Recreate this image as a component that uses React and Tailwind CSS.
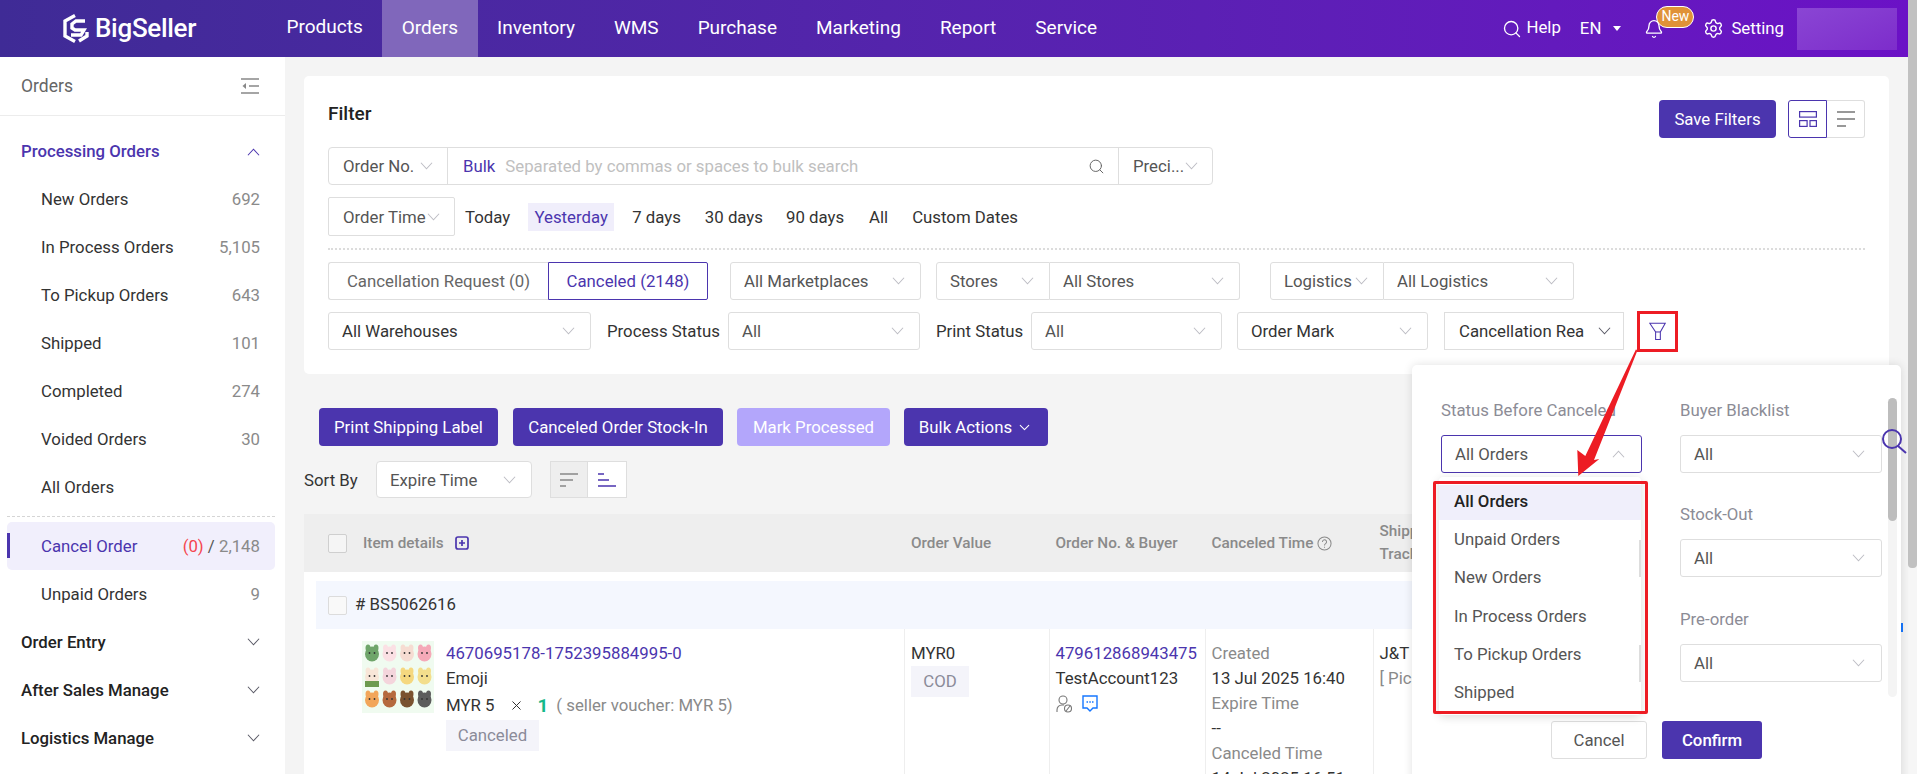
import React from "react";
import { Search, Bell, Settings, ChevronDown, X } from "lucide-react";

const Chev = ({ up = false, dark = false, purple = false }) => (
  <svg viewBox="0 0 14 8" className="w-[13px] h-[8px] shrink-0" fill="none" stroke={purple ? "#4b35ae" : dark ? "#5a5a66" : "#bdbdc4"} strokeWidth="1.1">
    <path d={up ? "M1 7.500 7 1l6 6.500" : "M1 .5 7 7l6-6.500"} />
  </svg>
);

const Sel = ({ w, text, dark = true, mr = "mr-[12px]", rounded = "rounded-[3px]" }) => (
  <div className={`${w} h-[38px] border border-[#dedede] ${rounded} bg-white flex items-center justify-between pl-[13px] pr-[15px] ${mr} shrink-0`}>
    <span className={`truncate pt-[2px] ${dark ? "text-[#333]" : "text-[#555]"}`}>{text}</span>
    <Chev />
  </div>
);

const SideItem = ({ label, count }) => (
  <div className="h-[48px] flex items-center justify-between pl-[41px] pr-[25px] pt-[2px]">
    <span className="text-[#333]">{label}</span>
    <span className="text-[#8a8a8a]">{count}</span>
  </div>
);

const SideGroup = ({ label }) => (
  <div className="h-[48px] flex items-center justify-between pl-[21px] pr-[25px]">
    <span className="text-[#222] font-medium pt-[2px]">{label}</span>
    <Chev dark />
  </div>
);

const Btn = ({ w, text, cls = "bg-[#4b35ae] text-white" }) => (
  <div className={`${w} h-[38px] pt-[2px] rounded-[4px] flex items-center justify-center shrink-0 ${cls}`}>{text}</div>
);

const Thumb = () => {
  const a = [
    ["#6fa56a", "#fbe0e4", "#f6dcd2", "#f5a9b8"],
    ["#f8e6d8", "#f4d5dc", "#f5d87f", "#f3de8c"],
    ["#f2a65a", "#b5693e", "#7a5230", "#5c5c5c"],
  ];
  return (
    <svg viewBox="0 0 72 72" className="w-[72px] h-[72px] shrink-0 bg-[#f0fbf0]">
      {a.map((r, i) =>
        r.map((c, j) => {
          const x = 10 + j * 17.5;
          const y = 13 + i * 23;
          return (
            <g key={`${i}${j}`}>
              <ellipse cx={x - 4} cy={y - 6} rx="2.500" ry="3.500" fill={c} />
              <ellipse cx={x + 4} cy={y - 6} rx="2.500" ry="3.500" fill={c} />
              <ellipse cx={x} cy={y} rx="7" ry="7.500" fill={c} />
              {i === 1 && j === 0 && <path d="M3 16h14v6H3z" transform="translate(0 24)" fill="#6d9a4f" />}
              <circle cx={x - 2.500} cy={y - 1} r="0.9" fill="#333" />
              <circle cx={x + 2.500} cy={y - 1} r="0.9" fill="#333" />
            </g>
          );
        })
      )}
    </svg>
  );
};

const Field = ({ label, text, cls = "", boxCls = "border-[#dedede]", up = false }) => (
  <div className={cls}>
    <div className="h-[20px] leading-[20px] text-[#8c8c96] whitespace-nowrap">{label}</div>
    <div className={`mt-[15px] h-[38px] border ${boxCls} rounded-[3px] flex items-center justify-between pl-[13px] pr-[16px] text-[#555]`}>
      <span className="pt-[2px]">{text}</span>
      <Chev up={up} />
    </div>
  </div>
);

export default function App() {
  const nav = ["Products", "Orders", "Inventory", "WMS", "Purchase", "Marketing", "Report", "Service"];
  return (
    <div className="relative w-[1917px] h-[774px] overflow-hidden flex bg-[#f4f4f4] text-[16.8px] text-[#333] font-['Roboto',sans-serif]">
      <div className="w-[1908px] h-full flex flex-col shrink-0">
        {/* top bar */}
        <header className="h-[57px] shrink-0 flex items-center bg-linear-to-r from-[#3f2b96] to-[#6b11c6] text-white">
          <div className="w-[267px] h-full pl-[62px] flex items-center shrink-0">
            <svg viewBox="0 0 28 31" className="w-[28px] h-[31px]" fill="none" stroke="#fff" strokeWidth="3.4">
              <path d="M13 2.500 3 8v15l10 5.500" />
              <path d="M23 8h-9l-4 3v4l3 2h9l-3 5H9" />
              <path d="M25 19v4l-8 5" />
            </svg>
            <span className="ml-[5px] text-[26px] font-medium tracking-[-0.3px]">BigSeller</span>
          </div>
          <nav className="flex h-full text-[19px]">
            {nav.map((n) => (
              <div key={n} className={`h-full px-[19.5px] flex items-center ${n === "Orders" ? "bg-[#8067bb]" : ""}`}>
                <span className={n === "Products" ? "pb-[2px]" : ""}>{n}</span>
              </div>
            ))}
          </nav>
          <div className="ml-auto h-full flex items-center relative">
            <Search size={20} strokeWidth={1.6} className="mr-[4px]" />
            <span className="pb-[2px]">Help</span>
            <span className="ml-[19px]">EN</span>
            <span className="ml-[12px] w-0 h-0 border-l-[4px] border-r-[4px] border-t-[5px] border-l-transparent border-r-transparent border-t-white" />
            <div className="relative ml-[23px] mr-[39px]">
              <Bell size={20} strokeWidth={1.6} />
              <span className="absolute left-[12px] -top-[13px] w-[38px] h-[22px] rounded-full bg-[#e09238] border border-white text-[14px] flex items-center justify-center">New</span>
            </div>
            <Settings size={21} strokeWidth={1.6} />
            <span className="ml-[7px]">Setting</span>
            <div className="ml-[13px] mr-[11px] w-[100px] h-[42px] bg-linear-to-br from-[#8a45d4] to-[#7d2ccb]" />
          </div>
        </header>

        <div className="flex-1 flex min-h-0">
          {/* sidebar */}
          <aside className="w-[285px] shrink-0 bg-white">
            <div className="h-[59px] border-b border-[#ececec] flex items-center justify-between pl-[21px] pr-[26px]">
              <span className="text-[#666] text-[17.5px]">Orders</span>
              <svg viewBox="0 0 18 16" className="w-[18px] h-[16px]" fill="none" stroke="#888" strokeWidth="1.5">
                <path d="M0 1h18M8 8h10M0 15h18" />
                <path d="M5 5 1.500 8 5 11z" fill="#888" stroke="none" />
              </svg>
            </div>
            <div className="mt-[12px] h-[47px] flex items-center justify-between pl-[21px] pr-[25px]">
              <span className="text-[#4b35ae] font-medium">Processing Orders</span>
              <Chev up purple />
            </div>
            <SideItem label="New Orders" count="692" />
            <SideItem label="In Process Orders" count="5,105" />
            <SideItem label="To Pickup Orders" count="643" />
            <SideItem label="Shipped" count="101" />
            <SideItem label="Completed" count="274" />
            <SideItem label="Voided Orders" count="30" />
            <SideItem label="All Orders" count="" />
            <div className="mx-[7px] w-[268px] mt-[5px] border-t border-dashed border-[#d5d5d5]" />
            <div className="relative mx-[7px] w-[268px] mt-[5px] h-[48px] pt-[2px] rounded-[5px] bg-[#f1effc] flex items-center justify-between pl-[34px] pr-[15px]">
              <span className="absolute left-0 top-[11px] w-[3px] h-[25px] bg-[#4b35ae]" />
              <span className="text-[#4b35ae]">Cancel Order</span>
              <span className="text-[#8a8a8a]"><span className="text-[#f5454f]">(0)</span> <span className="text-[#555]">/</span> 2,148</span>
            </div>
            <SideItem label="Unpaid Orders" count="9" />
            <SideGroup label="Order Entry" />
            <SideGroup label="After Sales Manage" />
            <SideGroup label="Logistics Manage" />
          </aside>

          {/* main */}
          <main className="flex-1 min-w-0 px-[19px] pt-[19px]">
            <section className="h-[298px] bg-white rounded-[5px] px-[24px] pt-[24px]">
              <div className="flex h-[38px] justify-between">
                <div className="text-[19px] font-medium text-[#222] leading-[28px]">Filter</div>
                <div className="flex">
                  <Btn w="w-[117px]" text="Save Filters" />
                  <div className="ml-[12px] w-[39px] h-[38px] border border-[#4b35ae] rounded-l-[3px] flex items-center justify-center">
                    <svg viewBox="0 0 18 16" className="w-[18px] h-[16px]" fill="none" stroke="#4b35ae" strokeWidth="1.2">
                      <rect x=".6" y=".6" width="16.8" height="5.500" />
                      <rect x=".6" y="9.600" width="7.500" height="5.800" />
                      <rect x="11" y="9.600" width="6.400" height="5.800" />
                    </svg>
                  </div>
                  <div className="w-[38px] h-[38px] border border-l-0 border-[#dedede] rounded-r-[3px] flex items-center justify-center">
                    <svg viewBox="0 0 18 16" className="w-[18px] h-[16px]" stroke="#333" strokeWidth="1.2">
                      <path d="M0 1h18M0 8h18M0 15h9" />
                    </svg>
                  </div>
                </div>
              </div>

              <div className="mt-[9px] w-[885px] h-[38px] border border-[#dedede] rounded-[4px] flex items-center">
                <div className="w-[119px] h-full border-r border-[#dedede] flex items-center justify-between pl-[14px] pr-[14px] text-[#555]">
                  <span className="pt-[2px]">Order No.</span>
                  <Chev />
                </div>
                <span className="ml-[15px] pt-[2px] text-[#4b35ae]">Bulk</span>
                <span className="ml-[10px] pt-[2px] text-[#c0c0c0]">Separated by commas or spaces to bulk search</span>
                <Search size={17} strokeWidth={1.4} className="ml-auto mr-[13px] text-[#666]" />
                <div className="w-[94px] h-full border-l border-[#dedede] flex items-center justify-between pl-[14px] pr-[14px] text-[#555]">
                  <span className="pt-[2px]">Preci...</span>
                  <Chev />
                </div>
              </div>

              <div className="mt-[12px] h-[39px] flex items-center">
                <div className="w-[127px] h-full border border-[#dedede] flex items-center justify-between pl-[14px] pr-[14px] text-[#555] rounded-[2px]">
                  <span className="pt-[2px] whitespace-nowrap">Order Time</span>
                  <Chev />
                </div>
                <span className="ml-[10px] pt-[2px]">Today</span>
                <span className="ml-[18px] w-[86px] h-[28px] pt-[2px] bg-[#f0eefb] text-[#4b35ae] flex items-center justify-center">Yesterday</span>
                <span className="ml-[18px] pt-[2px]">7 days</span>
                <span className="ml-[24px] pt-[2px]">30 days</span>
                <span className="ml-[23px] pt-[2px]">90 days</span>
                <span className="ml-[25px] pt-[2px]">All</span>
                <span className="ml-[24px] pt-[2px]">Custom Dates</span>
              </div>

              <div className="mt-[12px] border-t-2 border-dotted border-[#dcdcdc]" />

              <div className="mt-[12px] flex h-[38px]">
                <div className="w-[220px] pt-[2px] border border-[#dedede] border-r-0 rounded-l-[3px] flex items-center justify-center text-[#666]">Cancellation Request (0)</div>
                <div className="w-[160px] pt-[2px] border border-[#4b35ae] rounded-r-[2px] flex items-center justify-center text-[#4b35ae] mr-[22px]">Canceled (2148)</div>
                <Sel w="w-[191px]" text="All Marketplaces" dark={false} mr="mr-[15px]" />
                <Sel w="w-[114px]" text="Stores" dark={false} mr="" rounded="rounded-l-[3px]" />
                <Sel w="w-[190px]" text="All Stores" dark={false} mr="mr-[30px]" rounded="rounded-r-[3px] border-l-0" />
                <Sel w="w-[114px]" text="Logistics" dark={false} mr="" rounded="rounded-l-[3px]" />
                <Sel w="w-[190px]" text="All Logistics" dark={false} mr="" rounded="rounded-r-[3px] border-l-0" />
              </div>

              <div className="mt-[12px] flex h-[38px] items-center">
                <Sel w="w-[263px]" text="All Warehouses" mr="mr-[16px]" />
                <span className="w-[113px] mr-[8px] pt-[2px] whitespace-nowrap">Process Status</span>
                <Sel w="w-[192px]" text="All" dark={false} mr="mr-[16px]" />
                <span className="w-[86px] mr-[9px] pt-[2px] whitespace-nowrap">Print Status</span>
                <Sel w="w-[191px]" text="All" dark={false} mr="mr-[15px]" />
                <Sel w="w-[191px]" text="Order Mark" mr="mr-[16px]" />
                <div className="w-[180px] h-[38px] border border-[#dedede] flex items-center justify-between pl-[14px] pr-[12px] shrink-0">
                  <span className="whitespace-nowrap pt-[2px]">Cancellation Rea</span>
                  <Chev dark />
                </div>
                <div className="relative ml-[13px] w-[41px] h-[41px] border-[3.5px] border-[#ed1c24] flex items-center justify-center shrink-0">
                  <svg viewBox="0 0 18 19" className="w-[17px] h-[19px]" fill="none" stroke="#4b35ae" strokeWidth="1.1">
                    <path d="M.8.8h16.400L12 10v8H7V10z" />
                    <path d="M7 10h5" />
                  </svg>
                </div>
              </div>
            </section>

            <div className="mt-[34px] pl-[15px] flex h-[38px]">
              <Btn w="w-[179px]" text="Print Shipping Label" />
              <Btn w="w-[210px] ml-[15px]" text="Canceled Order Stock-In" />
              <Btn w="w-[153px] ml-[14px]" text="Mark Processed" cls="bg-[#b3a6fb] text-white" />
              <div className="w-[144px] ml-[14px] h-[38px] rounded-[4px] bg-[#4b35ae] text-white flex items-center justify-center gap-[4px]">
                <span className="pt-[2px]">Bulk Actions</span> <ChevronDown size={17} strokeWidth={1.5} />
              </div>
            </div>

            <div className="mt-[15px] flex items-center h-[37px]">
              <span className="w-[72px] pt-[2px]">Sort By</span>
              <div className="w-[156px] h-full border border-[#dedede] rounded-[4px] bg-white flex items-center justify-between pl-[13px] pr-[15px] text-[#555]">
                <span className="pt-[2px]">Expire Time</span>
                <Chev />
              </div>
              <div className="ml-[18px] w-[38px] h-full bg-[#eeeeee] border border-[#dedede] flex items-center justify-center">
                <svg viewBox="0 0 18 14" className="w-[18px] h-[14px]" stroke="#888" strokeWidth="1.4">
                  <path d="M0 1h18M0 7h13M0 13h6" />
                </svg>
              </div>
              <div className="w-[39px] h-full bg-white border border-l-0 border-[#dedede] flex items-center justify-center">
                <svg viewBox="0 0 18 14" className="w-[18px] h-[14px]" stroke="#4b35ae" strokeWidth="1.4">
                  <path d="M0 1h6M0 7h11M0 13h18" />
                </svg>
              </div>
            </div>

            {/* table */}
            <div className="mt-[16px] bg-white">
              <div className="h-[58px] bg-[#eeeeee] flex items-center text-[#8a8a8a] font-medium text-[15.3px]">
                <div className="w-[600px] flex items-center pl-[24px]">
                  <span className="w-[19px] h-[19px] border border-[#cfcfcf] rounded-[2px] bg-[#f5f5f5]" />
                  <span className="ml-[16px]">Item details</span>
                  <svg viewBox="0 0 14 14" className="ml-[11px] w-[14px] h-[14px]" fill="none" stroke="#4b35ae" strokeWidth="1.7">
                    <rect x="1" y="1" width="12" height="12" rx="2" />
                    <path d="M7 4v6M4 7h6" />
                  </svg>
                </div>
                <div className="w-[144.5px] pl-[7px]">Order Value</div>
                <div className="w-[156px] pl-[7px] whitespace-nowrap">Order No. &amp; Buyer</div>
                <div className="w-[168px] pl-[7px] flex items-center gap-[4px] whitespace-nowrap">
                  <span>Canceled Time</span>
                  <svg viewBox="0 0 16 16" className="w-[15px] h-[15px]" fill="none" stroke="#8a8a8a" strokeWidth="1.1">
                    <circle cx="8" cy="8" r="7" />
                    <path d="M5.800 6.300a2.200 2.200 0 1 1 3.400 1.800C8.400 8.600 8 9 8 10M8 11.500v1" />
                  </svg>
                </div>
                <div className="pl-[7px] leading-[23px]">Shipping<br />Tracking</div>
              </div>
              <div className="mt-[9px] ml-[12px] h-[48px] bg-[#f4f7fe] flex items-center pl-[12px]">
                <span className="w-[19px] h-[19px] border border-[#dcdcdc] rounded-[2px] bg-[#f9f9f9]" />
                <span className="ml-[8px] text-[#333]">#&nbsp;BS5062616</span>
              </div>
              <div className="flex leading-[25px]">
                <div className="w-[600px] flex pl-[58px] pt-[12px]">
                  <Thumb />
                  <div className="ml-[12px]">
                    <div className="text-[#4b35ae]">4670695178-1752395884995-0</div>
                    <div className="text-[#333]">Emoji</div>
                    <div className="mt-[2px] flex items-center text-[#333]">
                      <span>MYR 5</span>
                      <X size={15} strokeWidth={1.6} className="ml-[15px]" />
                      <span className="ml-[13px] text-[#14b88a] font-bold text-[19px]">1</span>
                      <span className="ml-[8px] text-[#8a8a8a]">( seller voucher: MYR 5)</span>
                    </div>
                    <div className="mt-[2px] w-[93px] h-[31px] bg-[#f4f4fa] text-[#8b8b99] flex items-center justify-center">Canceled</div>
                  </div>
                </div>
                <div className="w-[144.5px] border-l border-[#eeeeee] pl-[6px] pt-[12px]">
                  <div>MYR0</div>
                  <div className="w-[58px] h-[31px] bg-[#f4f4fa] text-[#8b8b99] flex items-center justify-center">COD</div>
                </div>
                <div className="w-[156px] border-l border-[#eeeeee] pl-[6px] pt-[12px]">
                  <div className="text-[#4b35ae]">479612868943475</div>
                  <div>TestAccount123</div>
                  <div className="flex items-center h-[25px] gap-[10px]">
                    <svg viewBox="0 0 16 18" className="w-[16px] h-[18px]" fill="none" stroke="#777" strokeWidth="1.1">
                      <circle cx="7" cy="5" r="4" />
                      <path d="M1 17v-2c0-3 2-5 5-5h2" />
                      <circle cx="12" cy="13.500" r="3.500" />
                      <path d="m10 16 4-5" />
                    </svg>
                    <svg viewBox="0 0 16 18" className="w-[16px] h-[18px]" fill="none" stroke="#1677ff" strokeWidth="1.4">
                      <path d="M1 1h14v12h-4l-3 3-3-3H1z" />
                      <path d="M4.500 7h1.500M7.300 7h1.500M10 7h1.500" />
                    </svg>
                  </div>
                </div>
                <div className="w-[168px] border-l border-[#eeeeee] pl-[6px] pt-[12px] whitespace-nowrap">
                  <div className="text-[#8a8a8a]">Created</div>
                  <div>13 Jul 2025 16:40</div>
                  <div className="text-[#8a8a8a]">Expire Time</div>
                  <div>--</div>
                  <div className="text-[#8a8a8a]">Canceled Time</div>
                  <div>14 Jul 2025 16:51</div>
                </div>
                <div className="border-l border-[#eeeeee] pl-[6px] pt-[12px] flex-1 whitespace-nowrap">
                  <div>J&amp;T Express</div>
                  <div className="text-[#8a8a8a]">[ Pick Up ]</div>
                </div>
              </div>
            </div>
          </main>
        </div>
      </div>

      {/* page scrollbar */}
      <div className="w-[9px] h-full shrink-0 bg-[#f6f6f6]">
        <div className="w-[9px] h-[568px] bg-[#c1c1c1] rounded-b-[4px]" />
      </div>

      {/* element peeking past the popover */}
      <div className="absolute left-[1900px] top-[623px] w-[3px] h-[9px] bg-[#1677ff]" />

      {/* popover */}
      <div className="absolute left-[1412px] top-[365px] w-[489px] h-[420px] bg-white rounded-[5px] shadow-[0_0_10px_rgba(0,0,0,0.12)] pl-[29px] pt-[35px]">
        <div className="grid grid-cols-[201px_202px] gap-x-[38px] gap-y-[31px]">
          <Field label="Status Before Canceled" text="All Orders" boxCls="border-[#4b35ae]" up />
          <Field label="Buyer Blacklist" text="All" />
          <div />
          <Field label="Stock-Out" text="All" />
          <div />
          <Field label="Pre-order" text="All" cls="mt-[1px]" />
        </div>
        <div className="mt-[39px] ml-[110px] flex">
          <div className="w-[96px] h-[38px] pt-[2px] border border-[#dedede] rounded-[3px] flex items-center justify-center text-[#555]">Cancel</div>
          <div className="ml-[15px] w-[100px] h-[38px] pt-[2px] bg-[#4b35ae] rounded-[3px] flex items-center justify-center text-white font-medium">Confirm</div>
        </div>

        <div className="absolute left-[476px] top-[33px] w-[9px] h-[299px] bg-[#f4f4f4] rounded-full">
          <div className="w-[9px] h-[123px] bg-[#bdbdbd] rounded-full" />
        </div>

        {/* open dropdown */}
        <div className="absolute left-[27px] top-[112px] w-[202px] h-[238px] bg-white rounded-[4px] shadow-[0_2px_10px_rgba(0,0,0,0.15)] pt-[8px] overflow-hidden">
          <div className="h-[35px] pb-[2px] bg-[#f0effb] flex items-center pl-[15px] font-medium text-[#222]">All Orders</div>
          {["Unpaid Orders", "New Orders", "In Process Orders", "To Pickup Orders", "Shipped"].map((t) => (
            <div key={t} className="h-[38.3px] pt-[1px] flex items-center pl-[15px] text-[#555]">{t}</div>
          ))}
          <div className="absolute right-0 top-[63px] w-[2px] h-[37px] bg-[#dddddd]" />
          <div className="absolute right-0 top-[168px] w-[2px] h-[37px] bg-[#dddddd]" />
        </div>
      </div>

      {/* annotations */}
      <div className="absolute left-[1433px] top-[481px] w-[215px] h-[233px] border-[3.5px] border-[#ed1c24] rounded-[2px]" />
      <svg className="absolute left-0 top-0 pointer-events-none" width="1917" height="774" viewBox="0 0 1917 774">
        <polygon points="1636,349.300 1637.300,350.700 1594,460 1599.300,459 1578.300,476 1577.300,450 1585.300,456" fill="#ed1c24" />
        <circle cx="1892" cy="439" r="9" fill="none" stroke="#4b35ae" strokeWidth="2" />
        <path d="m1898 446 8 7" stroke="#4b35ae" strokeWidth="2" />
      </svg>
    </div>
  );
}
